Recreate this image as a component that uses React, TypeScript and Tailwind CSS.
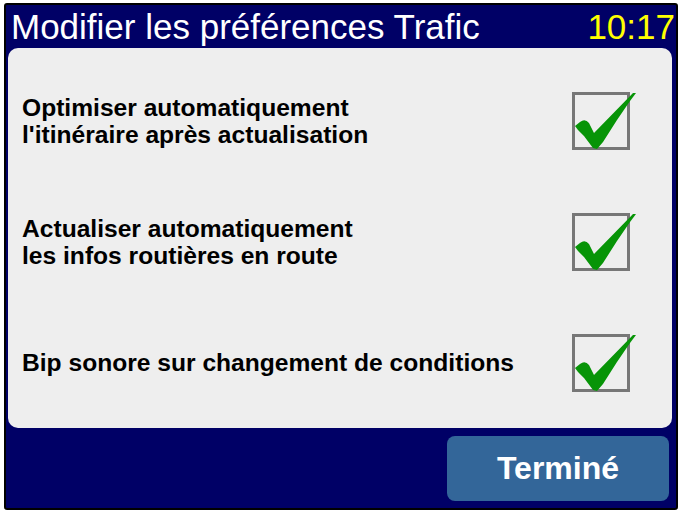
import React from "react";

const rows = [
  ["Optimiser automatiquement", "l'itinéraire après actualisation"],
  ["Actualiser automatiquement", "les infos routières en route"],
  ["Bip sonore sur changement de conditions"],
];

function CheckBox() {
  return (
    <div className="relative w-[58px] h-[58px] border-[3px] border-[#777777] shrink-0">
      <svg
        className="absolute left-[-3px] top-[-3px] overflow-visible"
        width="70"
        height="64"
        viewBox="0 0 70 64"
      >
        <path
          d="M3 34 L8 30 Q13 26 17 31 L22 41 L61 1 L64 1 L58 9 L45 28 L31 50 L25 57 L21 56 L12 44 L6 38 Z"
          fill="#079407"
        />
      </svg>
    </div>
  );
}

export default function App() {
  return (
    <div className="w-[681px] h-[515px] bg-white pt-[3px] pl-[4px]" style={{ fontFamily: '"Liberation Sans", Arial, sans-serif' }}>
      <div className="w-[674px] h-[507px] border-2 border-black rounded-[3px] bg-[#000066] flex flex-col">
        <div className="h-[43px] flex items-center justify-between pl-[5px] pr-[1px]">
          <span className="text-white text-[35px] leading-none">Modifier les préférences Trafic</span>
          <span className="text-[#ffff00] text-[35px] leading-none">10:17</span>
        </div>
        <div className="ml-[2px] w-[664px] h-[380px] bg-[#eeeeee] rounded-[10px] pt-[12px] pl-[14px] pr-[42px]">
          {rows.map((lines, i) => (
            <div key={i} className="h-[121px] flex items-center justify-between">
              <div className="text-black font-bold text-[24.6px] leading-[27px]">
                {lines.map((l) => (
                  <div key={l}>{l}</div>
                ))}
              </div>
              <CheckBox />
            </div>
          ))}
        </div>
        <div className="flex-1 flex items-center justify-end pr-[7px]">
          <div className="w-[222px] h-[65px] bg-[#336699] rounded-[8px] flex items-center justify-center text-white font-bold text-[32px]">
            Terminé
          </div>
        </div>
      </div>
    </div>
  );
}
